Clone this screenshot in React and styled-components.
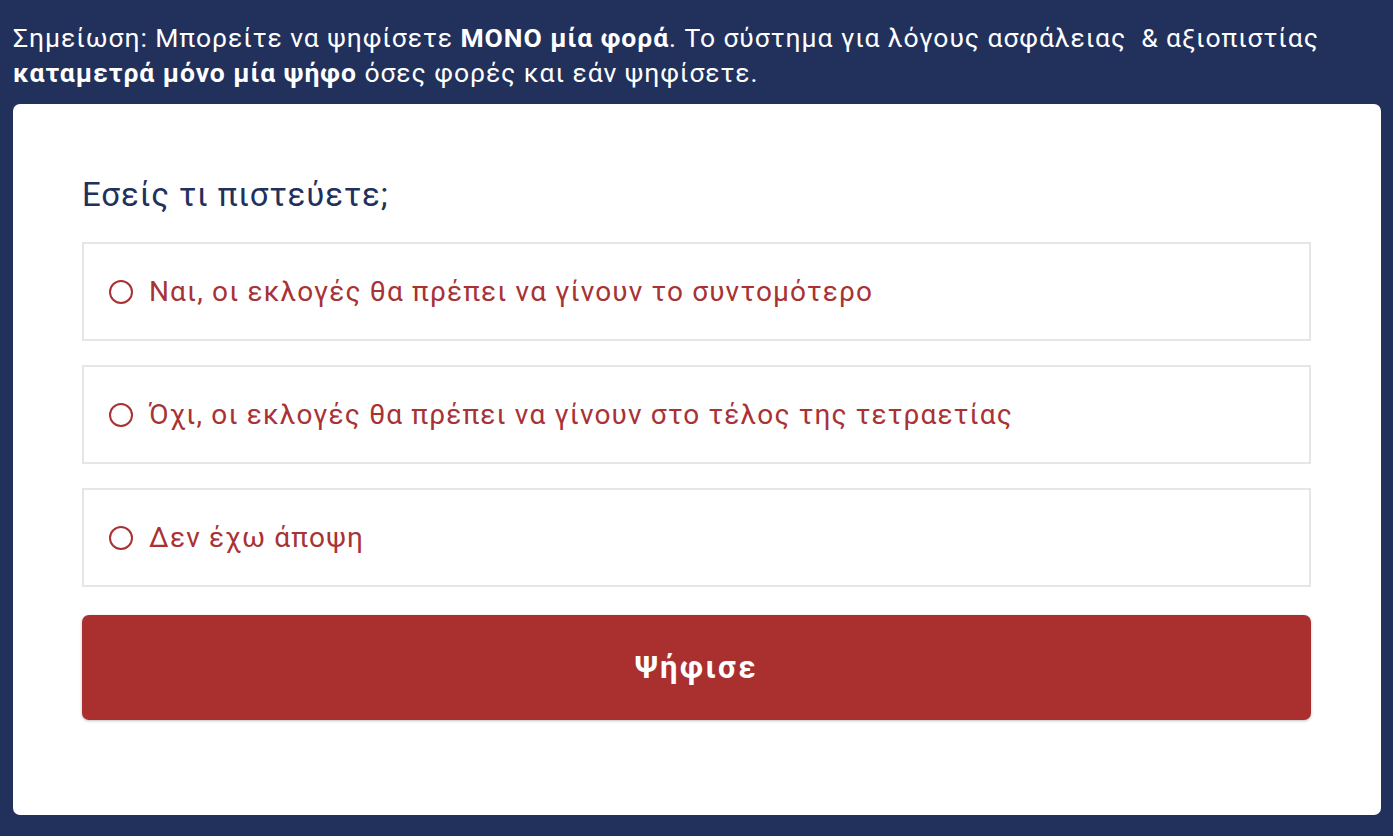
import React, { useState } from "react";
import styled, { createGlobalStyle } from "styled-components";

const Global = createGlobalStyle`
  html, body { margin: 0; padding: 0; background: #22305c; }
  body { font-family: Roboto, "Noto Sans", sans-serif; min-height: 836px; }
  * { box-sizing: border-box; }
`;

const Page = styled.div`
  display: flex;
  flex-direction: column;
  padding: 0 12px 21px 13px;
`;

const Notice = styled.p`
  margin: 0;
  padding: 20px 0 14px 0;
  color: #ffffff;
  font-size: 26.5px;
  line-height: 35px;
  font-weight: 400;
  letter-spacing: 0.93px;
  white-space: nowrap;
  b { font-weight: 700; }
`;

const Card = styled.div`
  background: #ffffff;
  border-radius: 7px;
  padding: 73px 70px 95px 69px;
  display: flex;
  flex-direction: column;
`;

const Question = styled.h2`
  margin: 0 0 29px 0;
  color: #22305c;
  font-size: 33px;
  line-height: 36px;
  font-weight: 400;
  letter-spacing: 0.9px;
`;

const Options = styled.div`
  display: flex;
  flex-direction: column;
  gap: 24px;
`;

const Option = styled.label`
  display: flex;
  align-items: center;
  gap: 16px;
  height: 99px;
  padding: 0 0 0 25px;
  border: 2px solid #e6e6e6;
  background: #fff;
  cursor: pointer;
`;

const Radio = styled.span`
  width: 24px;
  height: 24px;
  border-radius: 50%;
  border: 2px solid #a83234;
  display: flex;
  align-items: center;
  justify-content: center;
  flex: none;
  &::after {
    content: "";
    width: 12px;
    height: 12px;
    border-radius: 50%;
    background: ${(p) => (p.$checked ? "#a83234" : "transparent")};
  }
`;

const OptionText = styled.span`
  color: #a83234;
  font-size: 28px;
  line-height: 32px;
  letter-spacing: 1.15px;
`;

const VoteButton = styled.button`
  margin-top: 28px;
  height: 105px;
  border: none;
  border-radius: 7px;
  background: #aa2f2f;
  color: #ffffff;
  font-family: Roboto, "Noto Sans", sans-serif;
  font-size: 31px;
  font-weight: 700;
  letter-spacing: 2.4px;
  box-shadow: 0 1px 3px rgba(0, 0, 0, 0.25);
  cursor: pointer;
`;

const options = [
  "Ναι, οι εκλογές θα πρέπει να γίνουν το συντομότερο",
  "Όχι, οι εκλογές θα πρέπει να γίνουν στο τέλος της τετραετίας",
  "Δεν έχω άποψη",
];

export default function App() {
  const [sel, setSel] = useState(null);
  return (
    <>
      <Global />
      <Page>
        <Notice>
          Σημείωση: Μπορείτε να ψηφίσετε <b>ΜΟΝΟ μία φορά</b>. Το σύστημα για λόγους ασφάλειας&nbsp; &amp; αξιοπιστίας
          <br />
          <b>καταμετρά μόνο μία ψήφο</b> όσες φορές και εάν ψηφίσετε.
        </Notice>
        <Card>
          <Question>Εσείς τι πιστεύετε;</Question>
          <Options>
            {options.map((o, i) => (
              <Option key={i} onClick={() => setSel(i)}>
                <Radio $checked={sel === i} />
                <OptionText>{o}</OptionText>
              </Option>
            ))}
          </Options>
          <VoteButton>Ψήφισε</VoteButton>
        </Card>
      </Page>
    </>
  );
}
